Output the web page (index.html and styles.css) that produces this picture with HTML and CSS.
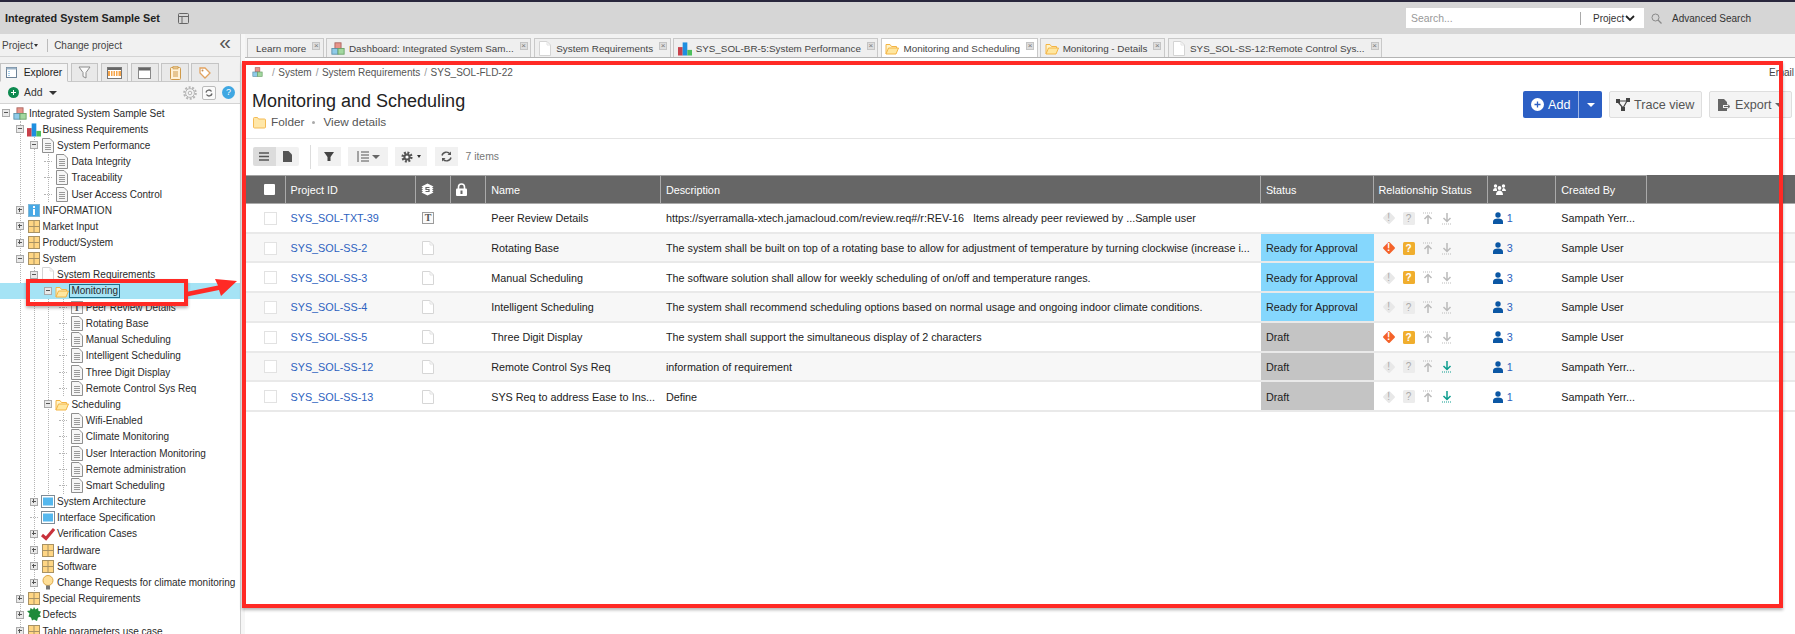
FILE: index.html
```html
<!DOCTYPE html>
<html>
<head>
<meta charset="UTF-8">
<title>Monitoring and Scheduling</title>
<link rel="stylesheet" href="styles.css">
</head>
<body>
<svg class="defs" width="0" height="0">
	<symbol id="proj" viewBox="0 0 16 15"><rect x="4.5" y="1" width="7" height="6.5" fill="#e8948a" stroke="#a8655f"/><rect x="1" y="7.5" width="7" height="6.5" fill="#8fcbe8" stroke="#5b8fa8"/><rect x="8" y="7.5" width="7" height="6.5" fill="#a3d8a0" stroke="#68a066"/></symbol>
	<symbol id="bars" viewBox="0 0 15 15"><rect x="0" y="6" width="5" height="9" fill="#c8414b"/><rect x="5" y="1" width="5" height="14" fill="#1e8fe0"/><rect x="10" y="9" width="5" height="6" fill="#4cbf5c"/></symbol>
	<symbol id="doc" viewBox="0 0 14 15"><path d="M1.5.5h7.5l3.5 3.5v10.5h-11z" fill="#f6f6f6" stroke="#8f8f8f"/><path d="M4 5.5h6M4 7.5h6M4 9.5h6M4 11.5h6" stroke="#9a9a9a"/></symbol>
	<symbol id="blank" viewBox="0 0 14 15"><path d="M1.5.5h7.5l3.5 3.5v10.5h-11z" fill="#fff" stroke="#d4d4d4"/><path d="M9 .5v3.5h3.5" fill="none" stroke="#e2e2e2"/></symbol>
	<symbol id="info" viewBox="0 0 14 15"><rect x="1.5" y="1.5" width="11" height="12" fill="#48a9e6" stroke="#7fb6d6"/><rect x="6" y="6" width="2" height="6" fill="#fff"/><rect x="6" y="3" width="2" height="2" fill="#fff"/></symbol>
	<symbol id="grid" viewBox="0 0 14 15"><rect x="1.5" y="1.5" width="11" height="12" fill="#ffd684" stroke="#a89264"/><path d="M7 1.5v12M1.5 7.5h11" stroke="#a89264"/></symbol>
	<symbol id="folder" viewBox="0 0 14 15"><path d="M1 13V3.5h4l1.5 2h5V8" fill="#fff3c8" stroke="#f4b544"/><path d="M1 13l2.5-6h10l-2.5 6z" fill="#ffe7a0" stroke="#f4b544"/></symbol>
	<symbol id="win" viewBox="0 0 14 15"><rect x=".5" y="1.5" width="13" height="12" fill="#fff" stroke="#7d8b96"/><rect x="2" y="3.5" width="10" height="8" fill="#55b8ee"/></symbol>
	<symbol id="check" viewBox="0 0 14 15"><path d="M1 9l4 3.5L13 3" fill="none" stroke="#c8323c" stroke-width="3"/></symbol>
	<symbol id="bulb" viewBox="0 0 14 15"><circle cx="7" cy="5.5" r="5" fill="#ffdf97" stroke="#dba748"/><rect x="5" y="10.5" width="4" height="4" fill="#777"/></symbol>
	<symbol id="bug" viewBox="0 0 14 15"><path d="M7 0l1.5 2.5L11 1l.5 3 2.5.5-1.5 3 1.5 2-3 1-1 3.5-3-1.5-2 1-1-3-2.5-1 1-3L0 4l3-.5L3.5 1 6 2.5z" fill="#1f8a3a"/></symbol>
	<symbol id="sheet" viewBox="0 0 12 14"><path d="M.5.5h7.5l3.5 3.5v9.5h-11z" fill="#fff" stroke="#d6d6d6"/><path d="M8 .5v3.5h3.5" fill="none" stroke="#e2e2e2"/></symbol>
	<symbol id="warn" viewBox="0 0 14 14"><rect x="2.5" y="2.5" width="9" height="9" rx="1" transform="rotate(45 7 7)" fill="currentColor"/></symbol>
	<symbol id="arrow-up" viewBox="0 0 12 13"><path d="M1 1h10" stroke="currentColor" stroke-dasharray="1 1"/><path d="M6 12V4M2.5 7L6 3.5 9.5 7" fill="none" stroke="currentColor" stroke-width="1.5"/></symbol>
	<symbol id="arrow-down" viewBox="0 0 12 13"><path d="M1 12h10" stroke="currentColor" stroke-dasharray="1 1"/><path d="M6 1v8M2.5 6L6 9.5 9.5 6" fill="none" stroke="currentColor" stroke-width="1.5"/></symbol>
	<symbol id="user" viewBox="0 0 10 12"><circle cx="5" cy="3" r="2.7" fill="#0b57a4"/><path d="M0 12V9.5C0 7.5 2 6.5 5 6.5s5 1 5 3V12z" fill="#0b57a4"/></symbol>
	<symbol id="gear" viewBox="0 0 14 14"><circle cx="7" cy="7" r="5" fill="none" stroke="currentColor" stroke-width="3" stroke-dasharray="2.2 1.7"/><circle cx="7" cy="7" r="4.2" fill="currentColor"/><circle cx="7" cy="7" r="1.8" fill="#fff"/></symbol>
	<symbol id="gear-line" viewBox="0 0 14 14"><circle cx="7" cy="7" r="5.8" fill="none" stroke="currentColor" stroke-width="2" stroke-dasharray="2 1.6"/><circle cx="7" cy="7" r="4.4" fill="#f4f4f4" stroke="currentColor"/><circle cx="7" cy="7" r="1.8" fill="none" stroke="currentColor"/></symbol>
</svg>

<div class="topline"></div>
<header class="topbar">
	<strong class="project-title">Integrated System Sample Set</strong>
	<svg class="layout-ico" width="11" height="11" viewBox="0 0 11 11"><rect x=".5" y=".5" width="10" height="10" rx="1" fill="none" stroke="#666"/><path d="M.5 3.5h10M4 3.5v7" stroke="#666"/></svg>
	<div class="search">
		<span class="search-hint">Search...</span>
		<span class="search-scope">Project<svg width="10" height="7" viewBox="0 0 10 7"><path d="M1 1l4 4 4-4" fill="none" stroke="#222" stroke-width="1.8"/></svg></span>
	</div>
	<svg class="search-ico" width="11" height="11" viewBox="0 0 11 11"><circle cx="4.5" cy="4.5" r="3.5" fill="none" stroke="#8a8a8a"/><path d="M7 7l3.5 3.5" stroke="#8a8a8a" stroke-width="1.3"/></svg>
	<a class="adv-search">Advanced Search</a>
</header>

<div class="workspace">
	<aside class="left">
		<div class="proj-bar">
			<span class="proj-menu">Project<i class="caret-s"></i></span>
			<span class="proj-change">Change project</span>
			<span class="collapse">«</span>
		</div>
		<div class="left-tabs">
			<span class="ltab on">
				<svg width="11" height="11" viewBox="0 0 11 11"><rect x=".5" y=".5" width="10" height="10" fill="#fff" stroke="#6d8296"/><rect x=".5" y=".5" width="10" height="2" fill="#9db4c7"/><path d="M2.5 4.5h1M2.5 6.5h1M2.5 8.5h1" stroke="#4a9bd4"/></svg>
				Explorer
			</span>
			<span class="ltab"><svg width="13" height="13" viewBox="0 0 13 13"><path d="M1 1h11L8 6.5V12L5 10.5V6.5z" fill="#fafafa" stroke="#8c8c8c"/></svg></span>
			<span class="ltab"><svg width="15" height="12" viewBox="0 0 15 12"><rect x=".5" y=".5" width="14" height="11" fill="#fff" stroke="#777"/><rect x="1" y="1" width="13" height="2" fill="#666"/><rect x="1" y="4" width="13" height="5" fill="#f6a54a"/><path d="M3.5 4v5M6 4v5M8.5 4v5M11 4v5" stroke="#fff"/></svg></span>
			<span class="ltab"><svg width="13" height="12" viewBox="0 0 13 12"><rect x=".5" y=".5" width="12" height="11" fill="#fff" stroke="#888"/><rect x="1" y="1" width="11" height="2.5" fill="#666"/></svg></span>
			<span class="ltab"><svg width="11" height="14" viewBox="0 0 11 14"><rect x=".5" y="1.5" width="10" height="12" rx="1" fill="#fff2d8" stroke="#cf9a4a"/><rect x="3" y=".5" width="5" height="2.5" fill="#e5c48c" stroke="#cf9a4a" stroke-width=".6"/><path d="M3 6h5M3 8h5M3 10h5" stroke="#cf9a4a"/></svg></span>
			<span class="ltab"><svg width="12" height="12" viewBox="0 0 12 12"><path d="M1 1h5l5 5-5 5-5-5z" fill="#fff" stroke="#e2a360" stroke-width="1.3"/><circle cx="3.5" cy="3.5" r="1" fill="#c58c50"/></svg></span>
		</div>
		<div class="add-bar">
			<svg class="add-ico" width="11" height="11" viewBox="0 0 11 11"><circle cx="5.5" cy="5.5" r="5.5" fill="#0e8a50"/><path d="M5.5 3v5M3 5.5h5" stroke="#fff"/></svg>
			<span class="add-text">Add</span><i class="caret"></i>
			<span class="add-tools">
				<svg class="cog" width="14" height="14"><use href="#gear-line"/></svg>
				<span class="sync"><svg width="8" height="8" viewBox="0 0 8 8"><path d="M1 3.5A3 3 0 0 1 6.5 2.5M7 4.5A3 3 0 0 1 1.5 5.5" fill="none" stroke="#666" stroke-width="1.4"/></svg></span>
				<span class="help">?</span>
			</span>
		</div>
		<ul class="tree">
			<li><div class="node"><i class="exp"></i><svg class="ico"><use href="#proj"/></svg><span>Integrated System Sample Set</span></div>
				<ul>
					<li><div class="node"><i class="exp"></i><svg class="ico"><use href="#bars"/></svg><span>Business Requirements</span></div>
						<ul>
							<li><div class="node"><i class="exp"></i><svg class="ico"><use href="#doc"/></svg><span>System Performance</span></div>
								<ul>
									<li><div class="node"><i class="stub"></i><svg class="ico"><use href="#doc"/></svg><span>Data Integrity</span></div></li>
									<li><div class="node"><i class="stub"></i><svg class="ico"><use href="#doc"/></svg><span>Traceability</span></div></li>
									<li><div class="node"><i class="stub"></i><svg class="ico"><use href="#doc"/></svg><span>User Access Control</span></div></li>
								</ul>
							</li>
						</ul>
					</li>
					<li><div class="node"><i class="exp plus"></i><svg class="ico"><use href="#info"/></svg><span>INFORMATION</span></div></li>
					<li><div class="node"><i class="exp plus"></i><svg class="ico"><use href="#grid"/></svg><span>Market Input</span></div></li>
					<li><div class="node"><i class="exp plus"></i><svg class="ico"><use href="#grid"/></svg><span>Product/System</span></div></li>
					<li><div class="node"><i class="exp"></i><svg class="ico"><use href="#grid"/></svg><span>System</span></div>
						<ul>
							<li><div class="node"><i class="exp"></i><svg class="ico"><use href="#blank"/></svg><span>System Requirements</span></div>
								<ul>
									<li><div class="node sel"><i class="exp"></i><svg class="ico"><use href="#folder"/></svg><span>Monitoring</span></div>
										<ul>
											<li><div class="node"><i class="stub"></i><i class="ico t-box">T</i><span>Peer Review Details</span></div></li>
											<li><div class="node"><i class="stub"></i><svg class="ico"><use href="#doc"/></svg><span>Rotating Base</span></div></li>
											<li><div class="node"><i class="stub"></i><svg class="ico"><use href="#doc"/></svg><span>Manual Scheduling</span></div></li>
											<li><div class="node"><i class="stub"></i><svg class="ico"><use href="#doc"/></svg><span>Intelligent Scheduling</span></div></li>
											<li><div class="node"><i class="stub"></i><svg class="ico"><use href="#doc"/></svg><span>Three Digit Display</span></div></li>
											<li><div class="node"><i class="stub"></i><svg class="ico"><use href="#doc"/></svg><span>Remote Control Sys Req</span></div></li>
										</ul>
									</li>
									<li><div class="node"><i class="exp"></i><svg class="ico"><use href="#folder"/></svg><span>Scheduling</span></div>
										<ul>
											<li><div class="node"><i class="stub"></i><svg class="ico"><use href="#doc"/></svg><span>Wifi-Enabled</span></div></li>
											<li><div class="node"><i class="stub"></i><svg class="ico"><use href="#doc"/></svg><span>Climate Monitoring</span></div></li>
											<li><div class="node"><i class="stub"></i><svg class="ico"><use href="#doc"/></svg><span>User Interaction Monitoring</span></div></li>
											<li><div class="node"><i class="stub"></i><svg class="ico"><use href="#doc"/></svg><span>Remote administration</span></div></li>
											<li><div class="node"><i class="stub"></i><svg class="ico"><use href="#doc"/></svg><span>Smart Scheduling</span></div></li>
										</ul>
									</li>
								</ul>
							</li>
							<li><div class="node"><i class="exp plus"></i><svg class="ico"><use href="#win"/></svg><span>System Architecture</span></div></li>
							<li><div class="node"><i class="stub"></i><svg class="ico"><use href="#win"/></svg><span>Interface Specification</span></div></li>
							<li><div class="node"><i class="exp plus"></i><svg class="ico"><use href="#check"/></svg><span>Verification Cases</span></div></li>
							<li><div class="node"><i class="exp plus"></i><svg class="ico"><use href="#grid"/></svg><span>Hardware</span></div></li>
							<li><div class="node"><i class="exp plus"></i><svg class="ico"><use href="#grid"/></svg><span>Software</span></div></li>
							<li><div class="node"><i class="exp plus"></i><svg class="ico"><use href="#bulb"/></svg><span>Change Requests for climate monitoring</span></div></li>
						</ul>
					</li>
					<li><div class="node"><i class="exp plus"></i><svg class="ico"><use href="#grid"/></svg><span>Special Requirements</span></div></li>
					<li><div class="node"><i class="exp plus"></i><svg class="ico"><use href="#bug"/></svg><span>Defects</span></div></li>
					<li><div class="node"><i class="exp plus"></i><svg class="ico"><use href="#grid"/></svg><span>Table parameters use case</span></div></li>
				</ul>
			</li>
		</ul>
	</aside>
	<div class="splitter"></div>

	<main class="right">
		<nav class="tabs">
			<span class="tab first">Learn more<i class="close"></i></span>
			<span class="tab"><svg class="tab-ico"><use href="#proj"/></svg>Dashboard: Integrated System Sam...<i class="close"></i></span>
			<span class="tab"><svg class="tab-ico"><use href="#blank"/></svg>System Requirements<i class="close"></i></span>
			<span class="tab"><svg class="tab-ico"><use href="#bars"/></svg>SYS_SOL-BR-5:System Performance<i class="close"></i></span>
			<span class="tab on"><svg class="tab-ico"><use href="#folder"/></svg>Monitoring and Scheduling<i class="close"></i></span>
			<span class="tab"><svg class="tab-ico"><use href="#folder"/></svg>Monitoring - Details<i class="close"></i></span>
			<span class="tab"><svg class="tab-ico"><use href="#blank"/></svg>SYS_SOL-SS-12:Remote Control Sys...<i class="close"></i></span>
		</nav>

		<div class="crumbs">
			<svg class="crumb-home" width="11" height="10"><use href="#proj"/></svg>
			<span class="sep">/</span><span>System</span>
			<span class="sep">/</span><span>System Requirements</span>
			<span class="sep">/</span><span>SYS_SOL-FLD-22</span>
			<span class="email">Email</span>
		</div>

		<section class="head">
			<div class="head-text">
				<h1>Monitoring and Scheduling</h1>
				<p class="meta"><svg width="13" height="13" viewBox="0 0 13 13"><path d="M.5 11V2.5a1 1 0 0 1 1-1h3l1 1.5h6a1 1 0 0 1 1 1V11a1 1 0 0 1-1 1h-10a1 1 0 0 1-1-1z" fill="#ffe7a8" stroke="#f4bb55"/></svg>Folder<i class="dot"></i>View details</p>
			</div>
			<div class="actions">
				<span class="btn-add">
					<span class="btn-add-main"><svg width="13" height="13" viewBox="0 0 13 13"><circle cx="6.5" cy="6.5" r="6.5" fill="#fff"/><path d="M6.5 3.5v6M3.5 6.5h6" stroke="#2c5fc4" stroke-width="1.3"/></svg>Add</span>
					<span class="btn-add-more"><i class="caret white"></i></span>
				</span>
				<span class="btn trace"><svg width="14" height="13" viewBox="0 0 14 13"><rect x="0" y="1" width="4" height="4" fill="#444"/><rect x="10" y="0" width="4" height="4" fill="#444"/><rect x="5" y="9" width="4" height="4" fill="#444"/><path d="M3 3h8M2 4l5 6M11 3l-4 7" stroke="#444" stroke-width="1.2"/></svg>Trace view</span>
				<span class="btn export"><svg width="14" height="14" viewBox="0 0 14 14"><path d="M1 1h6l3 3v3H6v3h4v3H1z" fill="#666"/><path d="M7 8.5h5M10.5 6.5l2.5 2-2.5 2" fill="none" stroke="#666"/></svg>Export<i class="caret gray"></i></span>
			</div>
		</section>

		<div class="tools">
			<span class="seg">
				<span class="tool on"><svg width="10" height="9" viewBox="0 0 10 9"><path d="M0 1h10M0 4.5h10M0 8h10" stroke="#555" stroke-width="1.3"/></svg></span>
				<span class="tool"><svg width="9" height="11" viewBox="0 0 9 11"><path d="M0 0h5.5L9 3.5V11H0z" fill="#555"/></svg></span>
			</span>
			<span class="tool-sep"></span>
			<span class="tool filter"><svg width="10" height="9" viewBox="0 0 10 9"><path d="M0 0h10L6.5 5v4h-3V5z" fill="#444"/></svg></span>
			<span class="tool sort"><svg width="13" height="11" viewBox="0 0 13 11"><path d="M5 1h8M5 4h8M5 7h8M5 10h8" stroke="#555"/><path d="M2 0v11" stroke="#555"/></svg><i class="caret gray"></i></span>
			<span class="tool conf"><svg width="12" height="12"><use href="#gear"/></svg><i class="caret-s"></i></span>
			<span class="tool refresh"><svg width="11" height="11" viewBox="0 0 11 11"><path d="M1 4.5A4.5 4.5 0 0 1 9 3M10 6.5A4.5 4.5 0 0 1 2 8" fill="none" stroke="#555" stroke-width="1.4"/><path d="M10 .5V4H6.5zM1 10.5V7h3.5z" fill="#555"/></svg></span>
			<span class="count">7 items</span>
		</div>

		<table class="grid">
			<colgroup>
				<col class="c-check"><col class="c-id"><col class="c-icon"><col class="c-icon"><col class="c-name"><col class="c-desc"><col class="c-status"><col class="c-rel"><col class="c-rev"><col class="c-by"><col>
			</colgroup>
			<thead>
				<tr>
					<th><i class="head-check"></i></th>
					<th>Project ID</th>
					<th><svg width="13" height="13" viewBox="0 0 13 13"><path d="M6.5 .5l6 3-1.5 1 1.5 1-1.5 1 1.5 1-1.5 1 1.5 1-6 3-6-3 1.5-1-1.5-1 1.5-1-1.500-1 1.500-1-1.500-1z" fill="#fff"/><path d="M8.5 4.500h-3.500v2h3v2h-3.500" fill="none" stroke="#666" stroke-width="1.2"/></svg></th>
					<th><svg width="11" height="13" viewBox="0 0 11 13"><path d="M2.5 6V4a3 3 0 0 1 6 0v2" fill="none" stroke="#fff" stroke-width="1.6"/><rect x="0" y="5.5" width="11" height="7.5" rx="1" fill="#fff"/><rect x="4.5" y="7.5" width="2" height="3.5" fill="#666"/></svg></th>
					<th>Name</th>
					<th>Description</th>
					<th>Status</th>
					<th>Relationship Status</th>
					<th><svg width="13" height="11" viewBox="0 0 13 11"><circle cx="2.5" cy="2" r="1.7" fill="#fff"/><circle cx="10.5" cy="2" r="1.7" fill="#fff"/><circle cx="6.5" cy="4" r="1.9" fill="#fff"/><path d="M0 7c0-2 1-3 2.5-3S4 5 4 7zM9 7c0-2 1-3 1.5-3S13 5 13 7zM3 11c0-3 1.5-4.5 3.5-4.5S10 8 10 11z" fill="#fff"/></svg></th>
					<th>Created By</th>
					<th class="filler"></th>
				</tr>
			</thead>
			<tbody>
				<tr>
					<td><i class="check"></i></td>
					<td><a>SYS_SOL-TXT-39</a></td>
					<td><i class="type t-box">T</i></td>
					<td></td>
					<td>Peer Review Details</td>
					<td>https://syerramalla-xtech.jamacloud.com/review.req#/r:REV-16 &nbsp;&nbsp;Items already peer reviewed by ...Sample user</td>
					<td></td>
					<td><span class="rel"><span class="flag off"><svg width="14" height="14"><use href="#warn"/></svg><b>!</b></span><span class="quest off">?</span><svg class="up" width="12" height="13"><use href="#arrow-up"/></svg><svg class="down" width="12" height="13"><use href="#arrow-down"/></svg></span></td>
					<td><span class="rev"><svg width="10" height="12"><use href="#user"/></svg><a>1</a></span></td>
					<td>Sampath Yerr...</td>
					<td></td>
				</tr>
				<tr>
					<td><i class="check"></i></td>
					<td><a>SYS_SOL-SS-2</a></td>
					<td><svg class="type" width="12" height="14"><use href="#sheet"/></svg></td>
					<td></td>
					<td>Rotating Base</td>
					<td>The system shall be built on top of a rotating base to allow for adjustment of temperature by turning clockwise (increase i...</td>
					<td class="ready">Ready for Approval</td>
					<td><span class="rel"><span class="flag"><svg width="14" height="14"><use href="#warn"/></svg><b>!</b></span><span class="quest">?</span><svg class="up" width="12" height="13"><use href="#arrow-up"/></svg><svg class="down" width="12" height="13"><use href="#arrow-down"/></svg></span></td>
					<td><span class="rev"><svg width="10" height="12"><use href="#user"/></svg><a>3</a></span></td>
					<td>Sample User</td>
					<td></td>
				</tr>
				<tr>
					<td><i class="check"></i></td>
					<td><a>SYS_SOL-SS-3</a></td>
					<td><svg class="type" width="12" height="14"><use href="#sheet"/></svg></td>
					<td></td>
					<td>Manual Scheduling</td>
					<td>The software solution shall allow for weekly scheduling of on/off and temperature ranges.</td>
					<td class="ready">Ready for Approval</td>
					<td><span class="rel"><span class="flag off"><svg width="14" height="14"><use href="#warn"/></svg><b>!</b></span><span class="quest">?</span><svg class="up" width="12" height="13"><use href="#arrow-up"/></svg><svg class="down" width="12" height="13"><use href="#arrow-down"/></svg></span></td>
					<td><span class="rev"><svg width="10" height="12"><use href="#user"/></svg><a>3</a></span></td>
					<td>Sample User</td>
					<td></td>
				</tr>
				<tr>
					<td><i class="check"></i></td>
					<td><a>SYS_SOL-SS-4</a></td>
					<td><svg class="type" width="12" height="14"><use href="#sheet"/></svg></td>
					<td></td>
					<td>Intelligent Scheduling</td>
					<td>The system shall recommend scheduling options based on normal usage and ongoing indoor climate conditions.</td>
					<td class="ready">Ready for Approval</td>
					<td><span class="rel"><span class="flag off"><svg width="14" height="14"><use href="#warn"/></svg><b>!</b></span><span class="quest off">?</span><svg class="up" width="12" height="13"><use href="#arrow-up"/></svg><svg class="down" width="12" height="13"><use href="#arrow-down"/></svg></span></td>
					<td><span class="rev"><svg width="10" height="12"><use href="#user"/></svg><a>3</a></span></td>
					<td>Sample User</td>
					<td></td>
				</tr>
				<tr>
					<td><i class="check"></i></td>
					<td><a>SYS_SOL-SS-5</a></td>
					<td><svg class="type" width="12" height="14"><use href="#sheet"/></svg></td>
					<td></td>
					<td>Three Digit Display</td>
					<td>The system shall support the simultaneous display of 2 characters</td>
					<td class="draft">Draft</td>
					<td><span class="rel"><span class="flag"><svg width="14" height="14"><use href="#warn"/></svg><b>!</b></span><span class="quest">?</span><svg class="up" width="12" height="13"><use href="#arrow-up"/></svg><svg class="down" width="12" height="13"><use href="#arrow-down"/></svg></span></td>
					<td><span class="rev"><svg width="10" height="12"><use href="#user"/></svg><a>3</a></span></td>
					<td>Sample User</td>
					<td></td>
				</tr>
				<tr>
					<td><i class="check"></i></td>
					<td><a>SYS_SOL-SS-12</a></td>
					<td><svg class="type" width="12" height="14"><use href="#sheet"/></svg></td>
					<td></td>
					<td>Remote Control Sys Req</td>
					<td>information of requirement</td>
					<td class="draft">Draft</td>
					<td><span class="rel"><span class="flag off"><svg width="14" height="14"><use href="#warn"/></svg><b>!</b></span><span class="quest off">?</span><svg class="up" width="12" height="13"><use href="#arrow-up"/></svg><svg class="down live" width="12" height="13"><use href="#arrow-down"/></svg></span></td>
					<td><span class="rev"><svg width="10" height="12"><use href="#user"/></svg><a>1</a></span></td>
					<td>Sampath Yerr...</td>
					<td></td>
				</tr>
				<tr>
					<td><i class="check"></i></td>
					<td><a>SYS_SOL-SS-13</a></td>
					<td><svg class="type" width="12" height="14"><use href="#sheet"/></svg></td>
					<td></td>
					<td>SYS Req to address Ease to Ins...</td>
					<td>Define</td>
					<td class="draft">Draft</td>
					<td><span class="rel"><span class="flag off"><svg width="14" height="14"><use href="#warn"/></svg><b>!</b></span><span class="quest off">?</span><svg class="up" width="12" height="13"><use href="#arrow-up"/></svg><svg class="down live" width="12" height="13"><use href="#arrow-down"/></svg></span></td>
					<td><span class="rev"><svg width="10" height="12"><use href="#user"/></svg><a>1</a></span></td>
					<td>Sampath Yerr...</td>
					<td></td>
				</tr>
			</tbody>
		</table>
	</main>
</div>

<!-- red marks drawn over the screenshot -->
<div class="mark mark-main"></div>
<div class="mark mark-tree"></div>
<svg class="mark-arrow" width="60" height="30" viewBox="0 0 60 30"><path d="M1 20L33 13.5 30 7 52 9 36 24 34 18 2 24.5z" fill="#ff2a25"/></svg>
</body>
</html>
```

FILE: styles.css
```css
*{
	margin: 0;
	padding: 0;
	box-sizing: border-box;
}
html,body{
	width: 1795px;
	height: 634px;
	overflow: hidden;
}
body{
	position: relative;
	background: #fff;
	color: #222;
	font: 10px "Liberation Sans", Arial, sans-serif;
}
i{
	font-style: normal;
}
.defs{
	position: absolute;
}
.topline{
	height: 2px;
	background: #29273d;
}
.topbar{
	display: flex;
	align-items: center;
	height: 32px;
	padding: 0 44px 0 5px;
	background: #d6d6d6;
}
.project-title{
	font-size: 10.8px;
	color: #222;
}
.layout-ico{
	margin-left: 18px;
}
.search{
	display: flex;
	align-items: center;
	justify-content: space-between;
	width: 238px;
	height: 20px;
	margin-left: auto;
	padding-left: 5px;
	background: #fff;
}
.search-hint{
	color: #999;
	font-size: 10.4px;
}
.search-scope{
	display: flex;
	align-items: center;
	gap: 1px;
	width: 64px;
	height: 13px;
	padding-left: 12px;
	border-left: 1px solid #aaa;
	color: #333;
}
.search-ico{
	margin-left: 7px;
}
.adv-search{
	margin-left: 10px;
	color: #333;
}
.workspace{
	display: flex;
	height: 600px;
}

/* left panel */
.left{
	flex: none;
	width: 240px;
	overflow: hidden;
}
.proj-bar{
	display: flex;
	align-items: center;
	height: 23px;
	padding: 0 9px 0 2px;
	background: #f1f1f1;
	border-bottom: 1px solid #d4d4d4;
	color: #444;
}
.proj-menu{
	display: flex;
	align-items: center;
	padding-right: 9px;
	border-right: 1px solid #bbb;
	line-height: 13px;
}
.proj-change{
	margin-left: 6px;
}
.collapse{
	margin-left: auto;
	margin-top: -6px;
	color: #555;
	font-size: 21px;
	line-height: 22px;
}
.caret-s{
	display: inline-block;
	margin-left: 1px;
	border: 2.5px solid transparent;
	border-top: 3px solid #333;
	border-bottom: 0;
}
.left-tabs{
	display: flex;
	align-items: flex-end;
	gap: 2.7px;
	height: 25px;
	background: #f1f1f1;
	border-bottom: 1px solid #c9c9c9;
}
.ltab{
	display: flex;
	align-items: center;
	justify-content: center;
	width: 27.5px;
	height: 19px;
	margin-bottom: -1px;
	background: #e9e9e9;
	border: 1px solid #c4c4c4;
	border-bottom: 1px solid #c9c9c9;
}
.ltab.on{
	width: 68px;
	gap: 7px;
	background: #f4f4f4;
	border-bottom-color: #f4f4f4;
	color: #222;
	font-size: 10.4px;
}
.add-bar{
	display: flex;
	align-items: center;
	height: 22px;
	padding-left: 8px;
	background: #f4f4f4;
	border-bottom: 1px solid #d4d4d4;
	font-size: 10.4px;
	color: #333;
}
.add-text{
	margin-left: 5px;
}
.caret{
	display: inline-block;
	margin-left: 6px;
	border: 4px solid transparent;
	border-top: 4px solid #333;
	border-bottom: 0;
}
.caret.white{
	margin: 0;
	border-top-color: #fff;
}
.caret.gray{
	border-top-color: #666;
}
.add-tools{
	display: flex;
	align-items: center;
	gap: 5px;
	margin-left: auto;
	padding-right: 5px;
}
.cog{
	color: #b5b5b5;
}
.sync{
	display: flex;
	align-items: center;
	justify-content: center;
	width: 14px;
	height: 14px;
	border: 1px solid #bbb;
	border-radius: 2px;
	background: #fafafa;
}
.help{
	width: 13px;
	height: 13px;
	margin-left: 1px;
	border-radius: 50%;
	background: #3fa7e2;
	color: #fff;
	font-size: 9px;
	line-height: 13px;
	text-align: center;
}

/* tree */
.tree{
	height: 530px;
	padding-top: 1px;
	list-style: none;
	overflow: hidden;
}
.tree ul{
	list-style: none;
	margin-left: 13.4px;
	border-left: 1px dotted #b5b5b5;
}
.tree > li > ul{
	margin-left: 19.6px;
}
.node{
	display: flex;
	align-items: center;
	height: 16.19px;
	margin-left: -5px;
	white-space: nowrap;
	color: #2a2a2a;
}
.tree > li > .node{
	margin-left: 2px;
}
.exp{
	position: relative;
	flex: none;
	width: 8px;
	height: 8px;
	margin-right: 3px;
	background: #e9e9e9;
	border: 1px solid #aaa;
}
.exp::before{
	content: "";
	position: absolute;
	left: 1px;
	top: 2px;
	width: 4px;
	height: 1px;
	background: #555;
}
.exp.plus::after{
	content: "";
	position: absolute;
	left: 2.5px;
	top: .5px;
	width: 1px;
	height: 4px;
	background: #555;
}
.stub{
	flex: none;
	width: 8px;
	margin-right: 3px;
	padding-left: 5px;
	border-top: 1px dotted #b5b5b5;
	background-clip: content-box;
}
.ico{
	flex: none;
	width: 14px;
	height: 15px;
	margin-right: 2px;
}
.t-box{
	display: block;
	width: 12px;
	height: 12px;
	background: #fafafa;
	border: 1px solid #9c9c9c;
	color: #555;
	font: bold 10px/10px "Liberation Serif", serif;
	text-align: center;
}
.ico.t-box{
	margin: 0 3px 0 1px;
	width: 12px;
	height: 13px;
	line-height: 11px;
}
.sel{
	background: #a5e3f5;
	box-shadow: -120px 0 0 #a5e3f5, 180px 0 0 #a5e3f5;
}
.sel span{
	outline: 1px solid #1f6f8b;
	outline-offset: 0;
	padding: 0 1px;
	margin: 0 0 0 -1px;
	line-height: 12px;
}
.splitter{
	flex: none;
	width: 5px;
	background: #f6f6f6;
	border-left: 1px solid #cfcfcf;
}

/* right side */
.right{
	flex: 1;
	min-width: 0;
}
.tabs{
	display: flex;
	align-items: flex-end;
	gap: 2.6px;
	height: 24px;
	padding-left: 2px;
	background: #f2f2f2;
	border-bottom: 1px solid #b4b4b4;
	white-space: nowrap;
	color: #444;
	font-size: 9.85px;
}
.tab{
	display: flex;
	align-items: center;
	height: 19px;
	padding: 0 2.5px 0 3.5px;
	background: #efefef;
	border: 1px solid #c9c9c9;
	border-bottom: 0;
}
.tab.first{
	padding-left: 8px;
}
.tab.on{
	background: #fff;
}
.tab-ico{
	flex: none;
	width: 14px;
	height: 15px;
	margin-right: 4px;
}
.close{
	flex: none;
	width: 8px;
	height: 8px;
	margin: -4px 0 0 6px;
	background: #ddd;
	border: 1px solid #c4c4c4;
	color: #777;
	font-size: 8px;
	line-height: 6px;
	text-align: center;
}
.close::before{
	content: "×";
}
.crumbs{
	display: flex;
	align-items: center;
	height: 14px;
	margin-top: 7px;
	padding: 0 1px 0 7px;
	color: #555;
	white-space: nowrap;
}
.crumb-home{
	margin-right: 5px;
}
.sep{
	margin: 0 3.5px 0 4px;
	color: #999;
}
.email{
	margin-left: auto;
	color: #444;
}
.head{
	display: flex;
	justify-content: space-between;
	height: 49px;
	margin-top: 11px;
	padding: 0 3px 0 7px;
	border-bottom: 1px solid #e4e4e4;
}
h1{
	font-size: 18px;
	font-weight: normal;
	line-height: 22px;
	color: #222;
}
.meta{
	display: flex;
	align-items: center;
	height: 16px;
	margin-top: 2px;
	font-size: 11.8px;
	color: #555;
}
.meta svg{
	margin: 0 5px 0 1px;
}
.dot{
	width: 3px;
	height: 3px;
	margin: 0 8px;
	border-radius: 50%;
	background: #aaa;
}
.actions{
	display: flex;
	gap: 7px;
	height: 27px;
	margin-top: 1px;
	font-size: 12.6px;
}
.btn-add{
	display: flex;
	width: 79px;
	border-radius: 2px;
	background: #2c5fc4;
	color: #fff;
}
.btn-add-main{
	display: flex;
	align-items: center;
	gap: 4px;
	width: 56px;
	padding-left: 8px;
	border-right: 1px solid #9db5e4;
}
.btn-add-more{
	display: flex;
	align-items: center;
	justify-content: center;
	flex: 1;
}
.btn{
	display: flex;
	align-items: center;
	height: 27px;
	border: 1px solid #dedede;
	border-radius: 2px;
	background: #f4f4f4;
	color: #555;
}
.trace{
	width: 93px;
	gap: 4px;
	padding-left: 6px;
}
.export{
	width: 83px;
	gap: 4px;
	padding-left: 7px;
}
.export .caret{
	margin-left: 0;
}
.tools{
	display: flex;
	align-items: center;
	height: 19px;
	margin-top: 8px;
	padding-left: 7.5px;
}
.seg{
	display: flex;
	border-radius: 2px;
	overflow: hidden;
}
.tool{
	display: flex;
	align-items: center;
	justify-content: center;
	gap: 3px;
	width: 23px;
	height: 19px;
	background: #f1f1f1;
	color: #555;
}
.tool.on{
	background: #dcdcdc;
}
.tool-sep{
	width: 1px;
	height: 24px;
	margin: 0 7px 0 11px;
	background: #ddd;
}
.tool.filter{
	margin-right: 7px;
}
.tool.sort{
	width: 40px;
	margin-right: 7px;
}
.tool.sort .caret{
	margin-left: 0;
}
.tool.conf{
	width: 32px;
	margin-right: 8px;
}
.count{
	margin-left: 8px;
	margin-top: -1px;
	font-size: 10.4px;
	color: #777;
}

/* table */
.grid{
	width: 100%;
	margin-top: 9px;
	table-layout: fixed;
	border-collapse: separate;
	border-spacing: 0;
	font-size: 10.8px;
}
.c-check{ width: 40.5px; }
.c-id{ width: 130.7px; }
.c-icon{ width: 35px; }
.c-name{ width: 174.7px; }
.c-desc{ width: 600px; }
.c-status{ width: 112.7px; }
.c-rel{ width: 114.7px; }
.c-rev{ width: 68px; }
.c-by{ width: 90.3px; }
th{
	height: 29px;
	padding: 0 5px;
	background: #666;
	border-top: 1px solid #a3a3a3;
	border-bottom: 1px solid #aaa;
	border-right: 1px solid #aaa;
	color: #fff;
	font-weight: normal;
	text-align: left;
	white-space: nowrap;
}
th svg{
	display: block;
}
th.filler{
	border-right: 0;
	border-top-color: #666;
}
td{
	height: 29.71px;
	padding: 1px 5px 0;
	border-bottom: 2px solid #e9e9e9;
	color: #222;
	white-space: nowrap;
	overflow: hidden;
}
tbody tr:nth-child(even) td{
	background: #f7f7f7;
}
td:first-child,th:first-child{
	padding-left: 19px;
}
td a{
	color: #2d62c0;
}
.head-check{
	display: block;
	width: 11px;
	height: 11px;
	background: #fff;
	border-radius: 1px;
}
.check{
	display: block;
	width: 13px;
	height: 13px;
	background: #fff;
	border: 1px solid #e2e2e2;
}
.type{
	display: block;
	margin-left: 1px;
}
tbody tr:nth-child(n) td.ready{
	background: #85d7fd;
}
tbody tr:nth-child(n) td.draft{
	background: #c4c4c4;
}
.rel{
	display: flex;
	align-items: center;
	gap: 7px;
	padding-left: 3px;
	color: #bbb;
}
.flag{
	position: relative;
	width: 14px;
	height: 14px;
	color: #f4632a;
}
.flag.off{
	color: #e8e8e8;
}
.flag svg{
	display: block;
}
.flag b{
	position: absolute;
	left: 0;
	right: 0;
	top: 0;
	color: #fff;
	font-size: 10px;
	line-height: 14px;
	text-align: center;
}
.flag.off b{
	color: #aaa;
	font-weight: normal;
}
.quest{
	width: 12px;
	height: 13px;
	border-radius: 1.5px;
	background: #f0ae2e;
	color: #fff;
	font-size: 10px;
	font-weight: bold;
	line-height: 13px;
	text-align: center;
}
.quest.off{
	background: #ececec;
	color: #aaa;
	font-weight: normal;
}
.down.live{
	color: #0d9d8f;
}
.rev{
	display: flex;
	align-items: center;
	gap: 3.5px;
}

/* annotations on top of the screenshot */
.mark{
	position: absolute;
	border: 4px solid #ff2a25;
	box-shadow: 0 2px 3px rgba(0,0,0,.3);
	pointer-events: none;
}
.mark-main{
	left: 242px;
	top: 61px;
	width: 1541px;
	height: 547px;
}
.mark-tree{
	left: 26px;
	top: 279px;
	width: 162px;
	height: 27px;
}
.mark-arrow{
	position: absolute;
	left: 185px;
	top: 272px;
}
```
